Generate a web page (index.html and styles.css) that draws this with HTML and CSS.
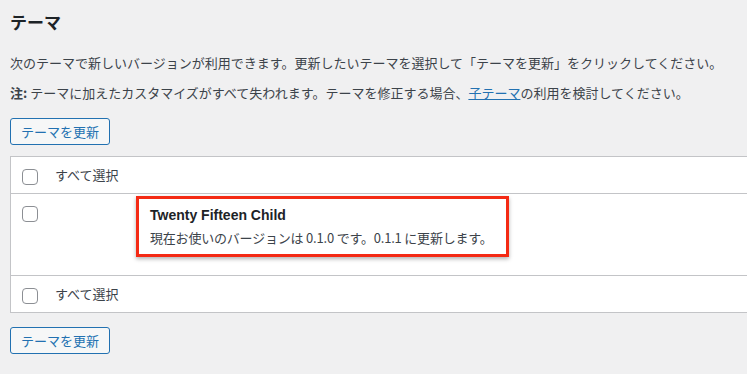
FILE: index.html
```html
<!DOCTYPE html>
<html lang="ja">
<head>
<meta charset="utf-8">
<link rel="stylesheet" href="styles.css">
</head>
<body>
<div class="wrap">
  <h2 class="title">テーマ</h2>
  <p class="note">次のテーマで新しいバージョンが利用できます。更新したいテーマを選択して「テーマを更新」をクリックしてください。</p>
  <p class="note"><strong>注:</strong> テーマに加えたカスタマイズがすべて失われます。テーマを修正する場合、<a href="#">子テーマ</a>の利用を検討してください。</p>
  <button class="btn" type="button">テーマを更新</button>

  <div class="list">
    <div class="row head">
      <div class="check"><input type="checkbox"></div>
      <label class="label">すべて選択</label>
    </div>
    <div class="row item">
      <div class="check"><input type="checkbox"></div>
      <div class="theme">
        <strong class="name">Twenty Fifteen Child</strong>
        <span class="version">現在お使いのバージョンは 0.1.0 です。0.1.1 に更新します。</span>
      </div>
    </div>
    <div class="row foot">
      <div class="check"><input type="checkbox"></div>
      <label class="label">すべて選択</label>
    </div>
  </div>

  <button class="btn" type="button">テーマを更新</button>
</div>
</body>
</html>
```

FILE: styles.css
```css
html, body {
  margin: 0;
  background: #f0f0f1;
  overflow: hidden;
}
body {
  color: #3c434a;
  font-family: "Noto Sans CJK JP", "Liberation Sans", sans-serif;
  font-size: 13px;
  line-height: 20px;
}

.wrap {
  padding: 10px 0 0 10px;
}

.title {
  margin: 0;
  font-size: 17px;
  line-height: 24px;
  font-weight: 700;
  color: #1d2327;
}

.note {
  margin: 19px 0 10px;
}
.note + .note {
  margin-top: 10px;
}
.note a {
  color: #2271b1;
}

.btn {
  display: block;
  height: 27px;
  padding: 0 10px;
  margin: 15px 0 0;
  border: 1px solid #2271b1;
  border-radius: 3px;
  background: #f6f7f7;
  color: #2271b1;
  font: inherit;
  line-height: 25px;
}

/* table of themes, wider than the window on the right */
.list {
  margin: 11px -30px 0 0;
  background: #fff;
  border: 1px solid #c3c4c7;
}
.row {
  display: flex;
  align-items: flex-start;
  padding: 12px 0 0 11px;
}
.row + .row {
  border-top: 1px solid #c3c4c7;
}
.head {
  height: 24px;
}
.foot {
  height: 24px;
}
.item {
  height: 81px;
  padding-top: 0;
}
.item .check {
  padding-top: 12px;
}

.check input {
  appearance: none;
  -webkit-appearance: none;
  display: block;
  width: 16px;
  height: 16px;
  margin: 0;
  border: 1px solid #8c8f94;
  border-radius: 4px;
  background: #fff;
}

.label {
  margin: -4px 0 0 17px;
}

/* red highlight drawn around the theme name */
.theme {
  display: flex;
  flex-direction: column;
  width: 356px;
  margin: 2px 0 0 98px;
  padding: 6px 0 6px 11px;
  border: 3px solid #f42a14;
  box-shadow: 0 2px 4px rgba(0, 0, 0, 0.3);
}
.name {
  color: #1d2327;
  font-family: "Liberation Sans", "Noto Sans CJK JP", sans-serif;
  font-size: 14px;
  line-height: 20px;
}
.version {
  margin-top: 3px;
  letter-spacing: -0.2px;
}

.list + .btn {
  margin-top: 14px;
}
```
